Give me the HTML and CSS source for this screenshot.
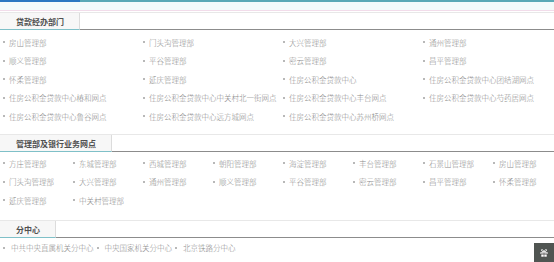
FILE: index.html
```html
<!DOCTYPE html>
<html lang="zh">
<head>
<meta charset="utf-8">
<link rel="stylesheet" href="styles.css">
</head>
<body>
<div class="topbar"></div>
<div class="band"></div>

<section class="sec sec1">
  <div class="sec-head"><span class="tab">贷款经办部门</span></div>
  <ul class="grid cols4">
    <li>房山管理部</li><li>门头沟管理部</li><li>大兴管理部</li><li>通州管理部</li>
    <li>顺义管理部</li><li>平谷管理部</li><li>密云管理部</li><li>昌平管理部</li>
    <li>怀柔管理部</li><li>延庆管理部</li><li>住房公积金贷款中心</li><li>住房公积金贷款中心团结湖网点</li>
    <li>住房公积金贷款中心椿和网点</li><li>住房公积金贷款中心中关村北一街网点</li><li>住房公积金贷款中心丰台网点</li><li>住房公积金贷款中心芍药居网点</li>
    <li>住房公积金贷款中心鲁谷网点</li><li>住房公积金贷款中心远方城网点</li><li>住房公积金贷款中心苏州桥网点</li>
  </ul>
</section>

<section class="sec sec2">
  <div class="sec-head"><span class="tab">管理部及银行业务网点</span></div>
  <ul class="grid cols8">
    <li>方庄管理部</li><li>东城管理部</li><li>西城管理部</li><li>朝阳管理部</li><li>海淀管理部</li><li>丰台管理部</li><li>石景山管理部</li><li>房山管理部</li>
    <li>门头沟管理部</li><li>大兴管理部</li><li>通州管理部</li><li>顺义管理部</li><li>平谷管理部</li><li>密云管理部</li><li>昌平管理部</li><li>怀柔管理部</li>
    <li>延庆管理部</li><li>中关村管理部</li>
  </ul>
</section>

<section class="sec sec3">
  <div class="sec-head"><span class="tab">分中心</span></div>
  <ul class="inline">
    <li>中共中央直属机关分中心</li><li>中央国家机关分中心</li><li>北京铁路分中心</li>
  </ul>
</section>

<div class="float-btn">
  <svg width="10" height="10" viewBox="0 0 10 10"><path d="M1 4h8v2H1z M2 6h6v3H2z M5 4v5" fill="#fff" stroke="#555" stroke-width="0.6"/><path d="M5 4C4 1 2 1 2.5 2.5S5 4 5 4C6 1 8 1 7.5 2.5S5 4 5 4" fill="none" stroke="#fff" stroke-width="0.9"/></svg>
</div>
</body>
</html>
```

FILE: styles.css
```css
* { box-sizing: border-box; }
html, body { margin: 0; padding: 0; background: #fff; }
body {
  font-family: "Noto Sans CJK SC", "Noto Sans", sans-serif;
  color: #888;
  width: 554px;
  height: 262px;
  overflow: hidden;
  position: relative;
}
.topbar {
  height: 2px;
  background: linear-gradient(to right, #2b78c2 0, #2b78c2 80px, #5aa9b6 80px, #5aa9b6 100%);
}
.band {
  height: 9px;
  background: #f3fbfb;
  border-bottom: 1px solid #f2dcea;
}
.sec-head {
  display: flex;
  height: 18px;
  border-top: 1px solid #e8e8e8;
  border-bottom: 1px solid #8c8c8c;
}
.sec1 .sec-head { margin-top: 1px; }
.tab {
  display: block;
  height: 17px;
  line-height: 17px;
  padding: 0 15px 0 16px;
  background: #f7f7f7;
  border-right: 1px solid #dcdcdc;
  border-bottom: 1px solid #7fc0c8;
  font-size: 8px;
  font-weight: bold;
  color: #505050;
}
ul { list-style: none; margin: 0; padding: 0; }
.grid { display: grid; padding-left: 2px; }
.cols4 { grid-template-columns: repeat(4, 140px); padding-top: 3px; }
.cols8 { grid-template-columns: repeat(8, 70px); padding-top: 2px; }
.grid li, .inline li {
  display: flex;
  align-items: center;
  height: 18.5px;
  font-size: 7.5px;
  font-weight: 300;
  white-space: nowrap;
  color: #8a8a8a;
}
.grid li::before, .inline li::before {
  content: "";
  width: 2px;
  height: 2px;
  border-radius: 50%;
  background: #a0a0a0;
  margin: 0 4px 0 1px;
  flex: none;
}
.sec2 { margin-top: 8.5px; }
.sec3 { margin-top: 10px; }
.inline { display: flex; padding: 1px 0 0 2px; }
.inline li::before { margin-right: 6px; }
.inline li + li::before { margin-left: 3px; }
.float-btn {
  position: absolute;
  right: 0;
  bottom: 0;
  width: 20px;
  height: 19px;
  background: #505552;
  display: flex;
  align-items: center;
  justify-content: center;
}
```
